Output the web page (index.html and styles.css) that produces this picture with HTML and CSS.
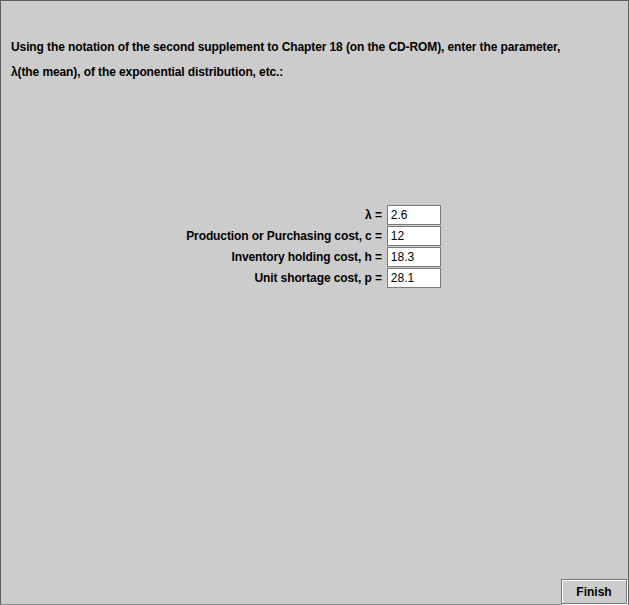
FILE: index.html
```html
<!DOCTYPE html>
<html>
<head>
<meta charset="utf-8">
<link rel="stylesheet" href="styles.css">
</head>
<body>
<div class="frame">
  <div class="intro">
    <p class="line">Using the notation of the second supplement to Chapter 18 (on the CD-ROM), enter the parameter,</p>
    <p class="line">λ(the mean), of the exponential distribution, etc.:</p>
  </div>
  <div class="form">
    <label class="lbl">λ =</label><div class="field">2.6</div>
    <label class="lbl">Production or Purchasing cost, c =</label><div class="field">12</div>
    <label class="lbl">Inventory holding cost, h =</label><div class="field">18.3</div>
    <label class="lbl">Unit shortage cost, p =</label><div class="field">28.1</div>
  </div>
  <div class="footer">
    <button class="btn">Finish</button>
  </div>
</div>
</body>
</html>
```
FILE: styles.css
```css
html, body {
  margin: 0;
  padding: 0;
  background: #cccccc;
}
.frame {
  box-sizing: border-box;
  width: 629px;
  height: 605px;
  border-left: 1px solid #5f5f5f;
  border-top: 1px solid #5f5f5f;
  border-right: 1px solid #5f5f5f;
  border-bottom: 1px solid #8a8a8a;
  background: #cccccc;
  display: flex;
  flex-direction: column;
  font-family: "Liberation Sans", Arial, sans-serif;
  font-size: 12px;
  color: #000;
}
.intro {
  padding: 38px 0 0 10px;
  display: flex;
  flex-direction: column;
  gap: 9px;
}
.line {
  margin: 0;
  font-weight: bold;
  line-height: 16px;
  letter-spacing: -0.1px;
}
.form {
  margin-top: 125px;
  padding-right: 2px;
  display: grid;
  grid-template-columns: auto 54px;
  grid-auto-rows: 20px;
  row-gap: 1px;
  column-gap: 5px;
  justify-content: center;
  align-items: center;
}
.lbl {
  font-weight: bold;
  text-align: right;
  line-height: 20px;
  letter-spacing: -0.1px;
}
.field {
  box-sizing: border-box;
  height: 20px;
  background: #fff;
  border: 1px solid #7a7a7a;
  padding: 0 3px;
  line-height: 19px;
  font-size: 12px;
}
.footer {
  margin-top: auto;
  display: flex;
  justify-content: flex-end;
  padding: 0 1px 0 0;
}
.btn {
  box-sizing: border-box;
  width: 66px;
  height: 25px;
  margin: 0;
  padding: 0;
  background: #cccccc;
  border: 1px solid #7a7a7a;
  box-shadow: inset 1px 1px 0 #ffffff, 1px 1px 0 #ffffff;
  font-family: "Liberation Sans", Arial, sans-serif;
  font-weight: bold;
  font-size: 12px;
  color: #000;
}
```
